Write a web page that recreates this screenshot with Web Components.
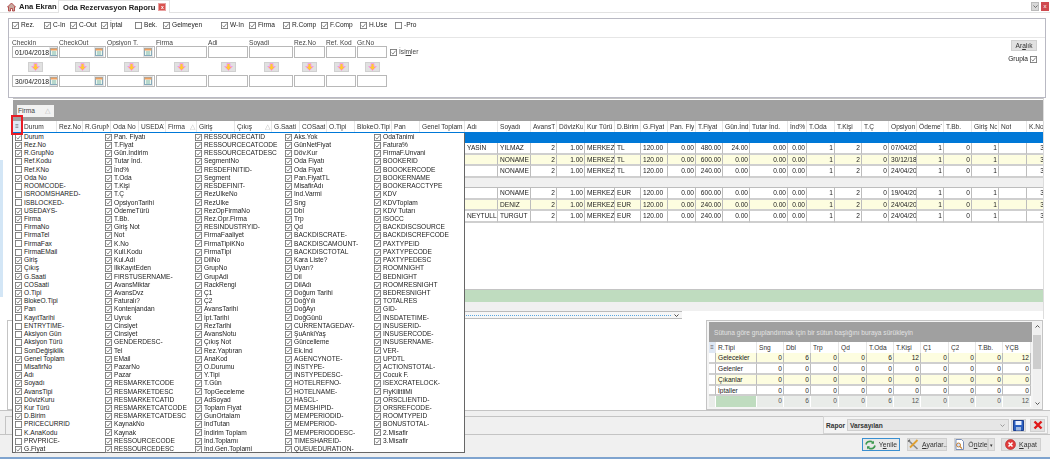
<!DOCTYPE html>
<html lang="tr"><head><meta charset="utf-8"><title>Oda Rezervasyon Raporu</title>
<style>
html,body{margin:0;padding:0;background:#fff}
body{font:6.6px "Liberation Sans",Arial,sans-serif;color:#222;width:1050px;height:459px;overflow:hidden}
</style></head><body>
<x-app></x-app>
<script>
const CHECK='<svg viewBox="0 0 8 8" width="7" height="7" style="display:block"><rect x=".5" y=".5" width="7" height="7" fill="#fff" stroke="#777"/><path class="m" d="M1.8 4.2 3.4 5.8 6.4 1.9" fill="none" stroke="#666" stroke-width=".9"/></svg>';
function def(name,css,html,setup){
  customElements.define(name,class extends HTMLElement{
    constructor(){super();this.attachShadow({mode:'open'}).innerHTML='<style>'+css+'</style>'+html;}
    connectedCallback(){if(setup&&!this._d){this._d=1;setup.call(this,this.shadowRoot);}}
  });
}
const ICON={
 home:'<svg width="9" height="10" viewBox="0 0 9 10"><path d="M4.5 1 .5 5h1v4h2V6.5h2V9h2V5h1z" fill="#c9a9a0" stroke="#a33" stroke-width=".8"/></svg>',
 cal:'<svg width="8" height="8" viewBox="0 0 8 8"><rect x=".5" y=".5" width="7" height="7" fill="#eef7ee" stroke="#8ab"/><rect x=".5" y=".5" width="7" height="2" fill="#f0a060"/><path d="M2 4h4M2 6h4" stroke="#6a9" stroke-width=".8"/></svg>',
 arrow:'<svg width="9" height="8" viewBox="0 0 9 8"><path d="M3 .5h3v3h2.3L4.5 7.5.7 3.5H3z" fill="#ffc933" stroke="#f49ae8" stroke-width=".9"/></svg>',
 save:'<svg width="11" height="11" viewBox="0 0 11 11"><path d="M.5.5h10v10H.5z" fill="#2a5fc0" stroke="#1b3f8f"/><rect x="2.5" y="1" width="6" height="4" fill="#e8f0ff"/><rect x="3" y="7" width="5" height="3.5" fill="#9fb8e0"/></svg>',
 del:'<svg width="10" height="10" viewBox="0 0 10 10"><path d="M1.5 1.5l7 7M8.5 1.5l-7 7" stroke="#e01818" stroke-width="2.4"/></svg>',
 refresh:'<svg width="11" height="10" viewBox="0 0 11 10"><path d="M1 4.5C1.5 2 4 .8 6.5 1.5L8 3M10 5.5C9.5 8 7 9.2 4.5 8.5L3 7" fill="none" stroke="#3f9a52" stroke-width="1.7"/><path d="M9 .8V3.8H6M2 9.2V6.2H5" fill="#3f9a52"/></svg>',
 tools:'<svg width="12" height="11" viewBox="0 0 12 11"><path d="M1.5 1.5 10.5 10" stroke="#888" stroke-width="1.6"/><path d="M10.5 1 3 8.5" stroke="#e0a030" stroke-width="1.8"/><path d="M1 2.5 3 .8" stroke="#666" stroke-width="1.2"/></svg>',
 prev:'<svg width="11" height="11" viewBox="0 0 11 11"><path d="M2 .5h5.5L9.5 2.5v8H2z" fill="#fff" stroke="#7a8fb8"/><circle cx="4.5" cy="6" r="2" fill="#cfe0ff" stroke="#c68030"/><path d="M6 7.5 8 9.7" stroke="#c68030" stroke-width="1.2"/></svg>',
 close:'<svg width="11" height="11" viewBox="0 0 11 11"><circle cx="5.5" cy="5.5" r="5" fill="#e23b3b" stroke="#a82020" stroke-width=".6"/><path d="M3.5 3.5l4 4M7.5 3.5l-4 4" stroke="#fff" stroke-width="1.5"/></svg>'
};
def('x-ico',':host{display:inline-flex;align-items:center;justify-content:center}','',function(s){s.innerHTML+=ICON[this.getAttribute('n')];});

def('x-check',`:host{display:inline-flex;align-items:center;gap:2px;white-space:nowrap;line-height:1}
:host(:not([checked])) .m{display:none}svg{flex:none}`,CHECK+'<span><slot></slot></span>');

def('x-tab',`:host{display:flex;align-items:center;gap:3px;font-weight:700;font-size:7.6px;color:#222;height:13px;box-sizing:border-box;white-space:nowrap}
:host([active]){background:#fff;border:1px solid #e3e3e3;border-bottom:none;padding:0 3px 0 4px;gap:3px}`,'<slot></slot>');

def('x-tabs',`:host{display:flex;height:13px;align-items:stretch;border-bottom:1px solid #e2e2e2;box-sizing:border-box}
.r{margin-left:auto;display:flex;gap:2px;padding:2px 1px 0 0}
.dd{width:8px;height:9px;background:#d8d8d8;border:1px solid #bbb;box-sizing:border-box;display:flex;align-items:center;justify-content:center}
.cl{width:8px;height:9px;background:#cf4a4f;color:#fff;font-size:6px;line-height:9px;text-align:center}
.x{width:6px;height:6px;background:#d9534f;border:1px solid #e8a0a0;color:#fff;font-size:5px;line-height:6px;text-align:center;font-weight:700}
.a{width:58px;padding-left:7px;box-sizing:border-box}
`,`<x-tab class="a"><x-ico n="home"></x-ico>Ana Ekran</x-tab><x-tab active>Oda Rezervasyon Raporu<span class="x">x</span></x-tab><div class="r"><div class="dd"><svg width="5" height="3" viewBox="0 0 5 3"><path d="M.5.5 2.5 2.5 4.5.5" fill="none" stroke="#555" stroke-width=".8"/></svg></div><div class="cl">x</div></div>`);

def('x-btn',`:host{display:inline-flex;align-items:center;justify-content:center;gap:3px;background:#e1e1e1;border:1px solid #d0d0d0;box-sizing:border-box;white-space:nowrap;color:#333}
:host([focus]){border:1px solid #3a8fd0;background:#e8e8e8}`,'<slot></slot>');

def('x-field',`:host{display:flex;align-items:center;height:12px;border:1px solid #b8b8b8;box-sizing:border-box;background:#fff;padding:0 1px 0 2px;font-size:6.8px;color:#222;overflow:hidden}
::slotted(span){flex:1;white-space:nowrap}`,'<slot></slot>');

def('x-filter',`:host{display:block;margin:5px 4px 0 8px;border:1px solid #b9b9c3;background:#fff;height:80px;box-sizing:border-box}
.top{display:grid;grid-template-columns:32px 26px 31px 34px 28px 58px 28px 34px 38px 39px 35px auto;height:18px;align-items:center;padding:0 0 6px 3px;border-bottom:1px solid #e6e6e6;box-sizing:content-box;height:12px}
.mid{display:flex;justify-content:space-between}
.cols{display:grid;grid-template-columns:47px 48px 49px 52px 41px 45px 32px 31px 31px auto;grid-template-rows:8px 12px 17px 12px;padding-left:3px;align-items:center;color:#444}
.cols>x-field{margin-right:1px;align-self:stretch}
.cal{background:#e4e4e4;padding:1px;margin-left:auto}
.arw{justify-self:center;width:15px;height:10px;margin-right:1px}
.is{grid-row:2/3;grid-column:10;margin-left:2px}
.side{display:flex;flex-direction:column;align-items:flex-end;gap:5px;padding:2px 8px 0 0}
.side x-btn{width:26px;height:11px}
.gr{flex-direction:row-reverse}
`,`<div class="top"></div><div class="mid"><div class="cols"></div><div class="side"><x-btn><span>Ar<u>a</u>lık</span></x-btn><x-check class="gr" checked>Grupla</x-check></div></div>`,function(s){
  const top=[['Rez.',1],['C-In',1],['C-Out',1],['İptal',1],['Bek.',0],['Gelmeyen',1],['W-In',1],['Firma',1],['R.Comp',1],['F.Comp',1],['H.Use',1],['-Pro',0]];
  s.querySelector('.top').innerHTML=top.map(([t,c])=>`<x-check ${c?'checked':''}>${t}</x-check>`).join('');
  const L=['CheckIn','CheckOut','Opsiyon T.','Firma','Adi','Soyadi','Rez.No','Ref. Kod','Gr.No'];
  let h=L.map(t=>`<div>${t}</div>`).join('')+'<div></div>';
  const row=(a)=>L.map((t,i)=>i<3?`<x-field>${i==0?`<span>${a}</span>`:''}<x-ico class="cal" n="cal"></x-ico></x-field>`:'<x-field></x-field>').join('');
  h+=row('01/04/2018')+'<x-check class="is" checked><span>İsi<u>m</u>ler</span></x-check>';
  h+=L.map(()=>'<x-btn class="arw"><x-ico n="arrow"></x-ico></x-btn>').join('')+'<div></div>';
  h+=row('30/04/2018')+'<div></div>';
  s.querySelector('.cols').innerHTML=h;
});

function bw(a){return a.slice(1).map((x,i)=>x-a[i]);}
const MW=bw([13,22,57,83,111,139,166,197,235,272,300,327,355,392,420,465,498,531,557,585,615,641,668,696,723,750,788,807,835,862,889,917,944,972,999,1027,1046]);
const MH=['≡','Durum','Rez.No','R.GrupNo','Oda No','USEDAYS','Firma','Giriş','Çıkış','G.Saati','COSaati','O.Tipi','BlokeO.Tipi','Pan','Genel Toplam','Adı','Soyadı','AvansTi','DövizKu','Kur Türü','D.Birim','G.Fiyat','Pan. Fiy','T.Fiyat','Gün.İnd','Tutar İnd.','İnd%','T.Oda','T.Kişi','T.Ç','Opsiyon','ÖdemeT','T.Bb.','Giriş No','Not','K.No'];
const E=Array(15).fill('');
const R=(ad,so,cur,tf,gi,op,t)=>({t,h:11.67,v:[...E,ad,so,'2','1.00','MERKEZ',cur,'120.00','0.00',tf,gi,'0.00','0.00','1','2','0',op,'1','0','1','','3']});
const SW=bw([709,716,757,784,811,839,867,894,921,949,976,1003,1031]);
const S=(n,a,t)=>({t,h:11,v:['',n,...a.map(String)]});
const z=Array(10).fill(0);
const TABLES={
 main:{w:MW,head:MH,sort:['Firma','Çıkış'],left:[...Array(17).keys(),20,21,30,34],firstCell:15,rows:[
 {t:'b'},
 R('YASİN','YILMAZ','TL','480.00','24.00','07/04/2018'),
 R('','NONAME','TL','600.00','0.00','30/12/18','y'),
 R('','NONAME','TL','240.00','0.00','24/04/2018'),
 {t:'g'},
 R('','NONAME','EUR','600.00','0.00','19/04/2018'),
 R('','DENIZ','EUR','240.00','0.00','24/04/2018','y'),
 R('NEYTULL','TURGUT','EUR','240.00','0.00','24/04/2018'),
 ]},
 sub:{w:SW,head:['≡','R.Tipi','Sng','Dbl','Trp','Qd','T.Oda','T.Kişi','Ç1','Ç2','T.Bb.','YÇB'],left:[0,1],firstCell:1,rows:[
 S('Gelecekler',[0,6,0,0,6,12,0,0,0,12],'y'),
 S('Gelenler',z),
 S('Çıkanlar',z,'y'),
 {...S('İptaller',z),h:10},
 {...S('',[0,6,0,0,6,12,0,0,0,12],'f'),h:11},
 ]}
};

def('x-table',`:host{display:block;overflow:hidden}
.g{display:grid;align-content:start}
.h{height:11px;line-height:11px;padding:0 1px 0 2px;white-space:nowrap;overflow:hidden;background:#fff;box-sizing:border-box;color:#333;display:flex;justify-content:space-between;border-right:1px solid #e6e6e6}
.h span:first-child{overflow:hidden;min-width:0}
.i{color:#555;font-weight:700;background:#dfe8f4;justify-content:center;font-size:6px;padding:0}
.c{box-sizing:border-box;padding:0 1px 0 2px;white-space:nowrap;overflow:hidden;border-right:1px solid #bdbdbd;border-bottom:2px solid #cfcfcf;background:#fff;color:#222;line-height:10.5px}
.n{text-align:right}
.y{background:#fdfde0}
.b{grid-column:1/-1;background:#0078d7;height:11px}
.gr{grid-column:1/-1;background:#f0f0f0;height:10px;border-bottom:1px solid #bdbdbd;box-sizing:border-box}
.f{background:#e9ece9;border-right:1px solid #fff;border-bottom:none;color:#555}
.fg{background:#bfdcbf}
`,'<div class="g"></div>',function(s){
  const d=TABLES[this.getAttribute('src')], g=s.querySelector('.g');
  g.style.gridTemplateColumns=d.w.map(x=>x+'px').join(' ');
  let h=d.head.map((t,i)=>{const arrow=d.sort&&d.sort.includes(t);return `<div class="h${i==0?' i':''}"><span>${t}</span>${arrow?'<span style="color:#bbb">△</span>':''}</div>`}).join('');
  for(const r of d.rows){
    if(r.t=='b'){h+='<div class="b"></div>';continue}
    if(r.t=='g'){h+='<div class="gr"></div>';continue}
    h+=r.v.map((v,i)=>{
      const left=d.left.includes(i);
      const cls=['c'];
      if(!left)cls.push('n');if(r.t=='y'&&(i>=d.firstCell))cls.push('y');
      if(r.t=='f'){cls.push('f');if(i==1)cls.push('fg')}
      return `<div class="${cls.join(' ')}" style="height:${r.h}px">${v}</div>`}).join('');
  }
  g.innerHTML=h;
});

def('x-main',`:host{display:flex;flex-direction:column;margin:0 6px 0 13px;height:221px;box-sizing:border-box;border-top:1px solid #c4c4c4;border-right:1px solid #ddd;padding-top:1px}
.band{height:21px;background:#a0a0a0;flex:none;display:flex;align-items:center;padding-left:4px;box-sizing:border-box}
.chip{width:37px;height:12px;background:#f2f2f2;display:flex;justify-content:space-between;align-items:center;padding:0 4px 0 1px;box-sizing:border-box;color:#444}
x-table{flex:1;min-height:0}
.fg{height:13px;background:#bfdcbf;flex:none;border-top:1px solid #c4c4c4;box-sizing:border-box}
.ga{height:9px;background:#f0f0f0;flex:none}
.sb{height:8px;flex:none;width:669px;border-top:1px solid #bbb;border-bottom:1px solid #bbb;box-sizing:border-box;background:#f6f6f6;display:flex;align-items:center}
.sb i{flex:1;border-top:1px dotted #5aa7e0;height:0}
.sb svg{margin:0 3px 0 3px}
`,`<div class="band"><div class="chip"><span>Firma</span><span style="color:#bbb">△</span></div></div><x-table src="main"></x-table><div class="fg"></div><div class="ga"></div><div class="sb"><i></i><svg width="5" height="3" viewBox="0 0 5 3"><path d="M.5.5 2.5 2.5 4.5.5" fill="none" stroke="#333" stroke-width=".9"/></svg></div>`);

def('x-lower',`:host{display:flex;justify-content:space-between;height:92px;background:#fff;border-bottom:1px solid #c4c4c4;box-sizing:border-box;padding:1px 7px 0 7px}
.gb{width:20px;height:88px;border:1px solid #c4c4c4;border-right:none}
.p{width:337px;height:90px;border:1px solid #c4c4c4;background:#f4f4f4;box-sizing:border-box;padding:1px;display:flex}
.l{width:326px;display:flex;flex-direction:column;margin-left:1px}
.band{height:20px;background:#a0a0a0;color:#e2e2e2;display:flex;align-items:center;padding-left:5px;flex:none;box-sizing:border-box}
.sc{width:8px;background:#f0f0f0;display:flex;flex-direction:column;justify-content:space-between;align-items:center;margin-left:1px}
.th{flex:1;background:#cdcdcd;margin:4px 0 30px;width:100%}
.sc svg{margin:3px 0}
`,`<div class="gb"></div><div class="p"><div class="l"><div class="band">Sütuna göre gruplandırmak için bir sütun başlığını buraya sürükleyin</div><x-table src="sub"></x-table></div><div class="sc"><svg width="5" height="3" viewBox="0 0 5 3"><path d="M.5 2.5 2.5.5 4.5 2.5" fill="none" stroke="#444" stroke-width=".9"/></svg><div class="th"></div><svg width="5" height="3" viewBox="0 0 5 3"><path d="M.5.5 2.5 2.5 4.5.5" fill="none" stroke="#444" stroke-width=".9"/></svg></div></div>`);

def('x-report',`:host{display:flex;justify-content:flex-end;background:#f0f0f0;height:24px;box-sizing:border-box;padding:5px 2px 1px 5px;border-bottom:1px solid #c4c4c4}
.l{flex:1;border:1px solid #c4c4c4;border-right:none;border-bottom:none;margin-bottom:-1px}
.p{width:225px;height:18px;border:1px solid #d4d4d4;background:#f4f4f4;box-sizing:border-box;display:flex;align-items:center;gap:2px;padding:0 2px;font-weight:700;color:#333}
.c{width:163px;height:12px;background:#e6e6e6;border:1px solid #cfcfcf;box-sizing:border-box;display:flex;align-items:center;justify-content:space-between;padding:0 3px 0 2px}
x-btn{width:15px;height:13px}
x-btn+x-btn{margin-left:2px}
`,`<div class="l"></div><div class="p"><span>Rapor</span><div class="c"><span>Varsayılan</span><svg width="5" height="3" viewBox="0 0 5 3"><path d="M.5.5 2.5 2.5 4.5.5" fill="none" stroke="#888" stroke-width=".8"/></svg></div><x-btn><x-ico n="save"></x-ico></x-btn><x-btn><x-ico n="del"></x-ico></x-btn></div>`);

def('x-actions',`:host{display:flex;justify-content:flex-end;align-items:flex-start;gap:7px;height:24px;background:#f0f0f0;padding:3px 9px 0 5px;box-sizing:border-box;border-bottom:2px solid #7fa4cf;color:#333;font-size:6.8px}
x-btn{height:13px;width:40px}
.y{width:38px}.o{width:34px;margin-right:-7px}.d{width:7px;font-size:5px;margin-right:-1px}.k{width:40px}
`,`<x-btn class="y" focus><x-ico n="refresh"></x-ico><span>Y<u>e</u>nile</span></x-btn><x-btn><x-ico n="tools"></x-ico><span><u>A</u>yarlar..</span></x-btn><x-btn class="o"><x-ico n="prev"></x-ico><span>Ö<u>n</u>izle</span></x-btn><x-btn class="d">▾</x-btn><x-btn class="k"><x-ico n="close"></x-ico><span><u>K</u>apat</span></x-btn>`);

const COLS=[
"Durum|Rez.No|R.GrupNo|!Ref.Kodu|!Ref.KNo|Oda No|!ROOMCODE-|!ISROOMSHARED-|!ISBLOCKED-|USEDAYS-|Firma|!FirmaNo|!FirmaTel|!FirmaFax|!FirmaEMail|Giriş|Çıkış|G.Saati|COSaati|O.Tipi|BlokeO.Tipi|Pan|!KayıtTarihi|!ENTRYTIME-|!Aksiyon Gün|!Aksiyon Türü|!SonDeğişiklik|Genel Toplam|!MisafirNo|Adı|Soyadı|AvansTipi|DövizKuru|Kur Türü|D.Birim|!PRICECURRID|!K.AnaKodu|!PRVPRICE-|G.Fiyat",
"Pan. Fiyatı|T.Fiyat|Gün.İndirim|Tutar İnd.|İnd%|T.Oda|T.Kişi|T.Ç|OpsiyonTarihi|ÖdemeTürü|T.Bb.|Giriş Not|Not|K.No|Kull.Kodu|Kul.Adi|IlkKayıtEden|FIRSTUSERNAME-|AvansMiktar|AvansDvz|Faturalı?|Kontenjandan|Uyruk|Cinsiyet|Cinsiyet|GENDERDESC-|Tel|EMail|PazarNo|Pazar|RESMARKETCODE|RESMARKETDESC|RESMARKETCATID|RESMARKETCATCODE|RESMARKETCATDESC|KaynakNo|Kaynak|RESSOURCECODE|RESSOURCEDESC",
"RESSOURCECATID|RESSOURCECATCODE|RESSOURCECATDESC|SegmentNo|RESDEFINITID-|Segment|RESDEFINIT-|RezUlkeNo|RezUlke|RezOpFirmaNo|Rez.Opr.Firma|RESINDUSTRYID-|FirmaFaaliyet|FirmaTipiKNo|FirmaTipi|DilNo|GrupNo|GrupAdi|RackRengi|Ç1|Ç2|AvansTarihi|İpt.Tarihi|RezTarihi|AvansNotu|Çıkış Not|Rez.Yaptıran|AnaKod|O.Durumu|Y.Tipi|T.Gün|TopGeceleme|AdSoyad|Toplam Fiyat|GunOrtalam|İndTutan|İndirim Toplam|İnd.Toplamı|İnd.Gen.Toplami",
"Aks.Yok|GünNetFiyat|Döv.Kur|Oda Fiyatı|Oda Fiyat|Pan.FiyatTL|MisafirAdı|Ind.Varmi|Sng|Dbl|Trp|Qd|BACKDISCRATE-|BACKDISCAMOUNT-|BACKDISCTOTAL|Kara Liste?|Uyarı?|Dil|DilAdı|Doğum Tarihi|DoğYılı|DoğAyı|DoğGünü|CURRENTAGEDAY-|ŞuAnkiYaş|Güncelleme|Ek.Ind|AGENCYNOTE-|INSTYPE-|INSTYPEDESC-|HOTELREFNO-|HOTELNAME-|HASCL-|MEMSHIPID-|MEMPERIODID-|MEMPERIOD-|MEMPERIODDESC-|TIMESHAREID-|QUEUEDURATION-",
"OdaTanimi|Fatura%|FirmaF.Unvani|BOOKERID|BOOOKERCODE|BOOKERNAME|BOOKERACCTYPE|KDV|KDVToplam|KDV Tutarı|ISOCC|BACKDISCSOURCE|BACKDISCREFCODE|PAXTYPEID|PAXTYPECODE|PAXTYPEDESC|ROOMNIGHT|BEDNIGHT|ROOMRESNIGHT|BEDRESNIGHT|TOTALRES|GID-|INSDATETIME-|INSUSERID-|INSUSERCODE-|INSUSERNAME-|VER-|UPDTL|ACTIONSTOTAL-|Cocuk F.|ISEXCRATELOCK-|FiyKilitliMi|ORSCLIENTID-|ORSREFCODE-|ROOMTYPEID|BONUSTOTAL-|2.Misafir|3.Misafir"];

def('x-columns',`:host{display:grid;grid-auto-flow:column;grid-template-rows:repeat(39,8.22px);grid-template-columns:90px 90px 90px 89px 1fr;width:453px;height:320px;background:#fff;border:1px solid #666;border-top:none;box-sizing:border-box;padding-left:2px;color:#222}
x-check{height:8.22px}`,'',function(s){
  let h='';
  COLS.forEach(c=>{const a=c.split('|');for(let i=0;i<39;i++){const t=a[i];if(t===undefined)h+='<div></div>';else h+=t[0]=='!'?`<x-check>${t.slice(1)}</x-check>`:`<x-check checked>${t}</x-check>`;}});
  s.innerHTML+=h;
});

def('x-app',`:host{display:block;width:1050px;height:459px;position:relative;overflow:hidden;filter:blur(.25px)}
x-columns{position:absolute;left:12px;top:133px}
.mark{position:absolute;left:11px;top:115px;width:12px;height:20px;border:2px solid #e81c24;box-sizing:border-box}
.edge{position:absolute;left:0;top:160px;width:3px;height:137px;background:#d3e6f6}
`,`<x-tabs></x-tabs><x-filter></x-filter><x-main></x-main><x-lower></x-lower><x-report></x-report><x-actions></x-actions><x-columns></x-columns><div class="mark"></div><div class="edge"></div>`);
</script>
</body></html>
